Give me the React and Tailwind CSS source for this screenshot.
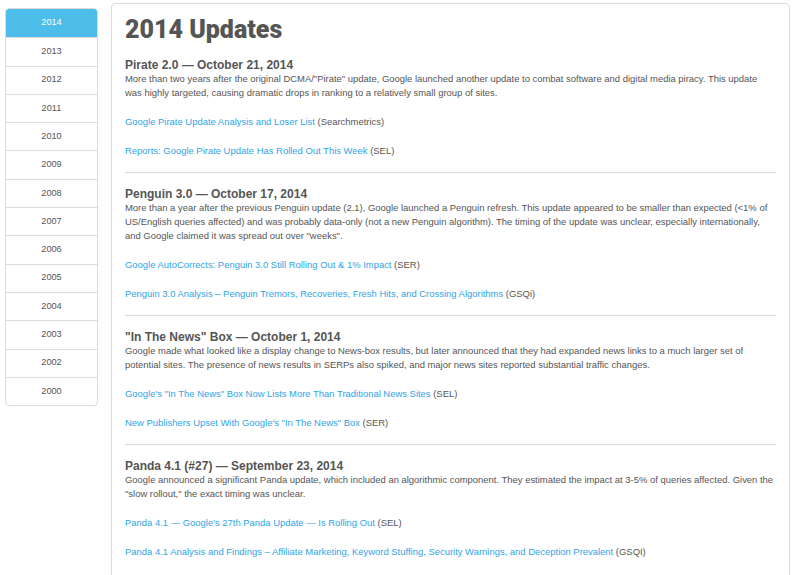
import React from "react";

const years = ["2014","2013","2012","2011","2010","2009","2008","2007","2006","2005","2004","2003","2002","2000"];

const sections = [
  {
    title: "Pirate 2.0 — October 21, 2014",
    body: "More than two years after the original DCMA/\"Pirate\" update, Google launched another update to combat software and digital media piracy. This update was highly targeted, causing dramatic drops in ranking to a relatively small group of sites.",
    links: [
      ["Google Pirate Update Analysis and Loser List", "(Searchmetrics)"],
      ["Reports: Google Pirate Update Has Rolled Out This Week", "(SEL)"],
    ],
  },
  {
    title: "Penguin 3.0 — October 17, 2014",
    body: "More than a year after the previous Penguin update (2.1), Google launched a Penguin refresh. This update appeared to be smaller than expected (<1% of US/English queries affected) and was probably data-only (not a new Penguin algorithm). The timing of the update was unclear, especially internationally, and Google claimed it was spread out over \"weeks\".",
    links: [
      ["Google AutoCorrects: Penguin 3.0 Still Rolling Out & 1% Impact", "(SER)"],
      ["Penguin 3.0 Analysis – Penguin Tremors, Recoveries, Fresh Hits, and Crossing Algorithms", "(GSQi)"],
    ],
  },
  {
    title: "\"In The News\" Box — October 1, 2014",
    body: "Google made what looked like a display change to News-box results, but later announced that they had expanded news links to a much larger set of potential sites. The presence of news results in SERPs also spiked, and major news sites reported substantial traffic changes.",
    links: [
      ["Google's \"In The News\" Box Now Lists More Than Traditional News Sites", "(SEL)"],
      ["New Publishers Upset With Google's \"In The News\" Box", "(SER)"],
    ],
  },
  {
    title: "Panda 4.1 (#27) — September 23, 2014",
    body: "Google announced a significant Panda update, which included an algorithmic component. They estimated the impact at 3-5% of queries affected. Given the \"slow rollout,\" the exact timing was unclear.",
    links: [
      ["Panda 4.1 — Google's 27th Panda Update — Is Rolling Out", "(SEL)"],
      ["Panda 4.1 Analysis and Findings – Affiliate Marketing, Keyword Stuffing, Security Warnings, and Deception Prevalent", "(GSQI)"],
    ],
  },
];

export default function App() {
  return (
    <div className="w-[792px] h-[575px] overflow-hidden bg-white flex items-start" style={{ fontFamily: '"Liberation Sans", Arial, sans-serif' }}>
      <div className="mt-[8px] ml-[5px] w-[93px] border border-[#dcdcdc] rounded-[4px] overflow-hidden shrink-0">
        {years.map((y, i) => (
          <div
            key={y}
            className={
              "h-[28.3px] flex items-center justify-center text-[9.2px] " +
              (i === 0 ? "bg-[#4dbde9] text-white" : "text-[#555] border-t border-[#dcdcdc]")
            }
          >
            {y}
          </div>
        ))}
      </div>
      <div className="ml-[13px] mt-[3px] w-[679px] border border-[#dcdcdc] rounded-[4px] px-[13px] pt-[11px] pb-[40px] shrink-0">
        <h1 className="text-[25px] leading-[30px] font-black text-[#555]" style={{ fontFamily: 'Roboto, sans-serif' }}>2014 Updates</h1>
        <div className="mt-[14px]">
          {sections.map((s, i) => (
            <div key={i} className={i > 0 ? "border-t border-[#dcdcdc] mt-[14px] pt-[15px]" : ""}>
              <h2 className="text-[12px] leading-[13px] font-bold text-[#555]">{s.title}</h2>
              <p className="text-[9.45px] leading-[14px] text-[#555]">{s.body}</p>
              {s.links.map((l, j) => (
                <p key={j} className="text-[9.45px] leading-[14px] text-[#555] mt-[15px]">
                  <a className="text-[#2fa4e7]">{l[0]}</a> {l[1]}
                </p>
              ))}
            </div>
          ))}
        </div>
      </div>
    </div>
  );
}
